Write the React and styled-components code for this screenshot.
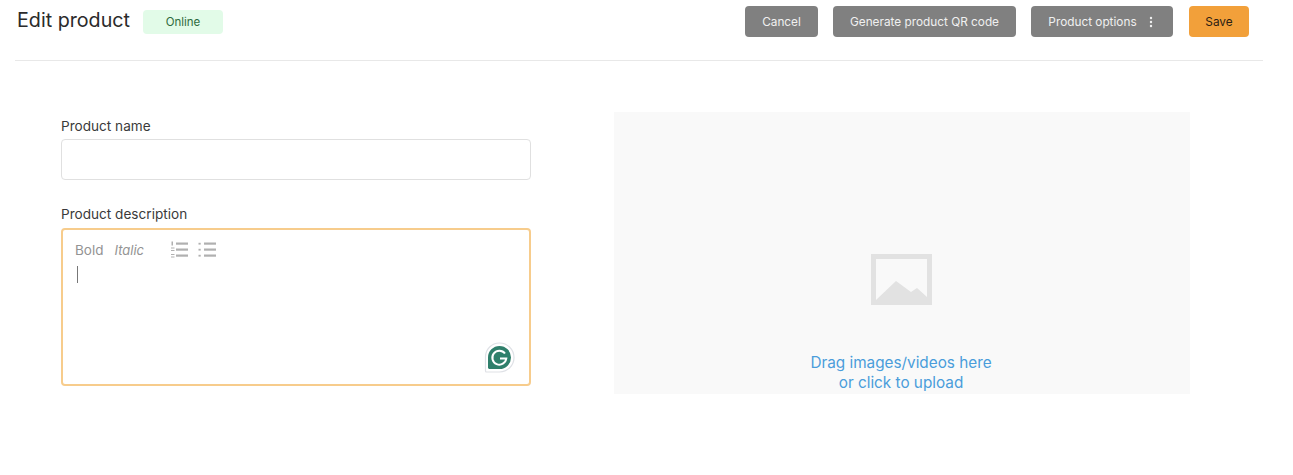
import React from "react";
import styled, { createGlobalStyle } from "styled-components";

const Global = createGlobalStyle`
  html, body { margin: 0; padding: 0; background: #fff; }
  body { font-family: Inter, "Liberation Sans", sans-serif; }
`;
const Page = styled.div`
  width: 1293px;
  height: 475px;
  overflow: hidden;
  padding: 0 30px 0 15px;
  box-sizing: border-box;
`;
const Header = styled.header`
  display: flex;
  align-items: flex-start;
  justify-content: space-between;
  box-sizing: border-box;
  height: 61px;
  padding: 6px 14px 0 2px;
  border-bottom: 1px solid #e8e8e8;
`;
const TitleGroup = styled.div`
  display: flex;
  align-items: flex-start;
  gap: 13px;
`;
const Title = styled.h1`
  margin: 0;
  font-size: 19.7px;
  line-height: 28px;
  font-weight: 400;
  color: #2b2b2b;
`;
const Badge = styled.span`
  display: flex;
  align-items: center;
  justify-content: center;
  width: 80px;
  height: 24px;
  margin-top: 4px;
  border-radius: 4px;
  background: #e2fbe8;
  color: #2f6b3d;
  font-size: 11.5px;
`;
const Actions = styled.div`
  display: flex;
  gap: 15px;
`;
const Button = styled.button`
  display: flex;
  align-items: center;
  justify-content: center;
  gap: 12px;
  width: ${(p) => p.$w}px;
  height: 31px;
  margin-left: ${(p) => (p.$primary ? "1px" : "0")};
  padding: 0 ${(p) => (p.$menu ? "3px" : "0")} 0 0;
  border: none;
  border-radius: 4px;
  background: ${(p) => (p.$primary ? "#f2a03a" : "#808080")};
  color: ${(p) => (p.$primary ? "#2b2114" : "#f0f0f0")};
  font-family: inherit;
  font-size: 11.8px;
`;
const Main = styled.main`
  display: flex;
  align-items: flex-start;
  gap: 83px;
  padding: 51px 0 0 46px;
`;
const Form = styled.div`
  width: 470px;
  display: flex;
  flex-direction: column;
`;
const Label = styled.label`
  display: block;
  font-size: 13.6px;
  line-height: 18px;
  color: #3a3a3a;
  margin: 5px 0 4px;
`;
const Input = styled.div`
  height: 41px;
  box-sizing: border-box;
  border: 1px solid #e0e0e0;
  border-radius: 4px;
  margin-bottom: 20px;
`;
const Editor = styled.div`
  position: relative;
  height: 158px;
  margin-top: 1px;
  box-sizing: border-box;
  border: 2px solid #f7cc8c;
  border-radius: 4px;
  padding: 11px 12px;
`;
const Toolbar = styled.div`
  display: flex;
  align-items: center;
  height: 18px;
  color: #939393;
  font-size: 13.5px;
`;
const ToolItalic = styled.span`
  font-style: italic;
  font-size: 13px;
  margin-left: 11px;
  margin-right: 26px;
`;
const ListIcons = styled.span`
  display: flex;
  gap: 9px;
`;
const Caret = styled.div`
  width: 1px;
  height: 17px;
  margin: 7px 0 0 2px;
  background: #777;
`;
const GrammarlyBadge = styled.div`
  position: absolute;
  right: 14px;
  bottom: 11px;
  width: 31px;
  height: 31px;
`;
const Upload = styled.div`
  width: 576px;
  height: 282px;
  box-sizing: border-box;
  background: #f9f9f9;
  display: flex;
  flex-direction: column;
  align-items: center;
  padding: 142px 2px 0 0;
`;
const Placeholder = styled.svg`
  width: 61px;
  height: 51px;
  display: block;
`;
const UploadText = styled.div`
  margin-top: 48px;
  text-align: center;
  color: #4a9ddb;
  font-size: 15.3px;
  line-height: 20px;
`;

const OrderedIcon = () => (
  <svg width="19" height="18" viewBox="0 0 19 18">
    <g fill="#b0b0b0">
      <rect x="6" y="1.500" width="12" height="2.200" />
      <rect x="6" y="7.500" width="12" height="2.200" />
      <rect x="6" y="13.500" width="12" height="2.200" />
      <rect x="1.500" y="0.500" width="1.500" height="4" />
      <rect x="1" y="6.500" width="3.500" height="1" />
      <rect x="1" y="9" width="3.500" height="1" />
      <rect x="1" y="13" width="3.500" height="1" />
      <rect x="1" y="15.500" width="3.500" height="1" />
    </g>
  </svg>
);
const BulletIcon = () => (
  <svg width="19" height="18" viewBox="0 0 19 18">
    <g fill="#b0b0b0">
      <rect x="0.500" y="1.800" width="2.200" height="1.800" />
      <rect x="0.500" y="7.800" width="2.200" height="1.800" />
      <rect x="0.500" y="13.800" width="2.200" height="1.800" />
      <rect x="6" y="1.500" width="12" height="2.200" />
      <rect x="6" y="7.500" width="12" height="2.200" />
      <rect x="6" y="13.500" width="12" height="2.200" />
    </g>
  </svg>
);
const Dots = () => (
  <svg width="4" height="12" viewBox="0 0 4 12">
    <g fill="#f0f0f0">
      <circle cx="2" cy="2" r="1.2" />
      <circle cx="2" cy="6" r="1.2" />
      <circle cx="2" cy="10" r="1.2" />
    </g>
  </svg>
);
const G = () => (
  <svg width="31" height="31" viewBox="0 0 31 31">
    <path d="M15.500 1a14.500 14.500 0 0 1 0 29H2.500a1 1 0 0 1-1-1V15.500A14 14 0 0 1 15.500 1z" fill="#fff" stroke="#dfe1e6" strokeWidth="1.200" />
    <path d="M15.500 4a11.500 11.500 0 0 1 0 23H5L4 26V15.500A11.500 11.500 0 0 1 15.500 4z" fill="#2f7f6b" />
    <path d="M21 11.500A7 7 0 1 0 22.300 16.500H16" fill="none" stroke="#fff" strokeWidth="2" />
  </svg>
);

export default function App() {
  return (
    <Page>
      <Global />
      <Header>
        <TitleGroup>
          <Title>Edit product</Title>
          <Badge>Online</Badge>
        </TitleGroup>
        <Actions>
          <Button $w={73}>Cancel</Button>
          <Button $w={183}>Generate product QR code</Button>
          <Button $w={142} $menu>Product options <Dots /></Button>
          <Button $w={60} $primary>Save</Button>
        </Actions>
      </Header>
      <Main>
        <Form>
          <Label>Product name</Label>
          <Input />
          <Label>Product description</Label>
          <Editor>
            <Toolbar>
              Bold
              <ToolItalic>Italic</ToolItalic>
              <ListIcons><OrderedIcon /><BulletIcon /></ListIcons>
            </Toolbar>
            <Caret />
            <GrammarlyBadge><G /></GrammarlyBadge>
          </Editor>
        </Form>
        <Upload>
          <Placeholder viewBox="0 0 61 51">
            <path fillRule="evenodd" d="M0 0h61v51H0zM5 5v41h51V5z" fill="#e2e2e2" />
            <path d="M5 46 L25 27 L40 38 L46 34 L56 43 V46 Z" fill="#e2e2e2" />
          </Placeholder>
          <UploadText>Drag images/videos here<br />or click to upload</UploadText>
        </Upload>
      </Main>
    </Page>
  );
}
